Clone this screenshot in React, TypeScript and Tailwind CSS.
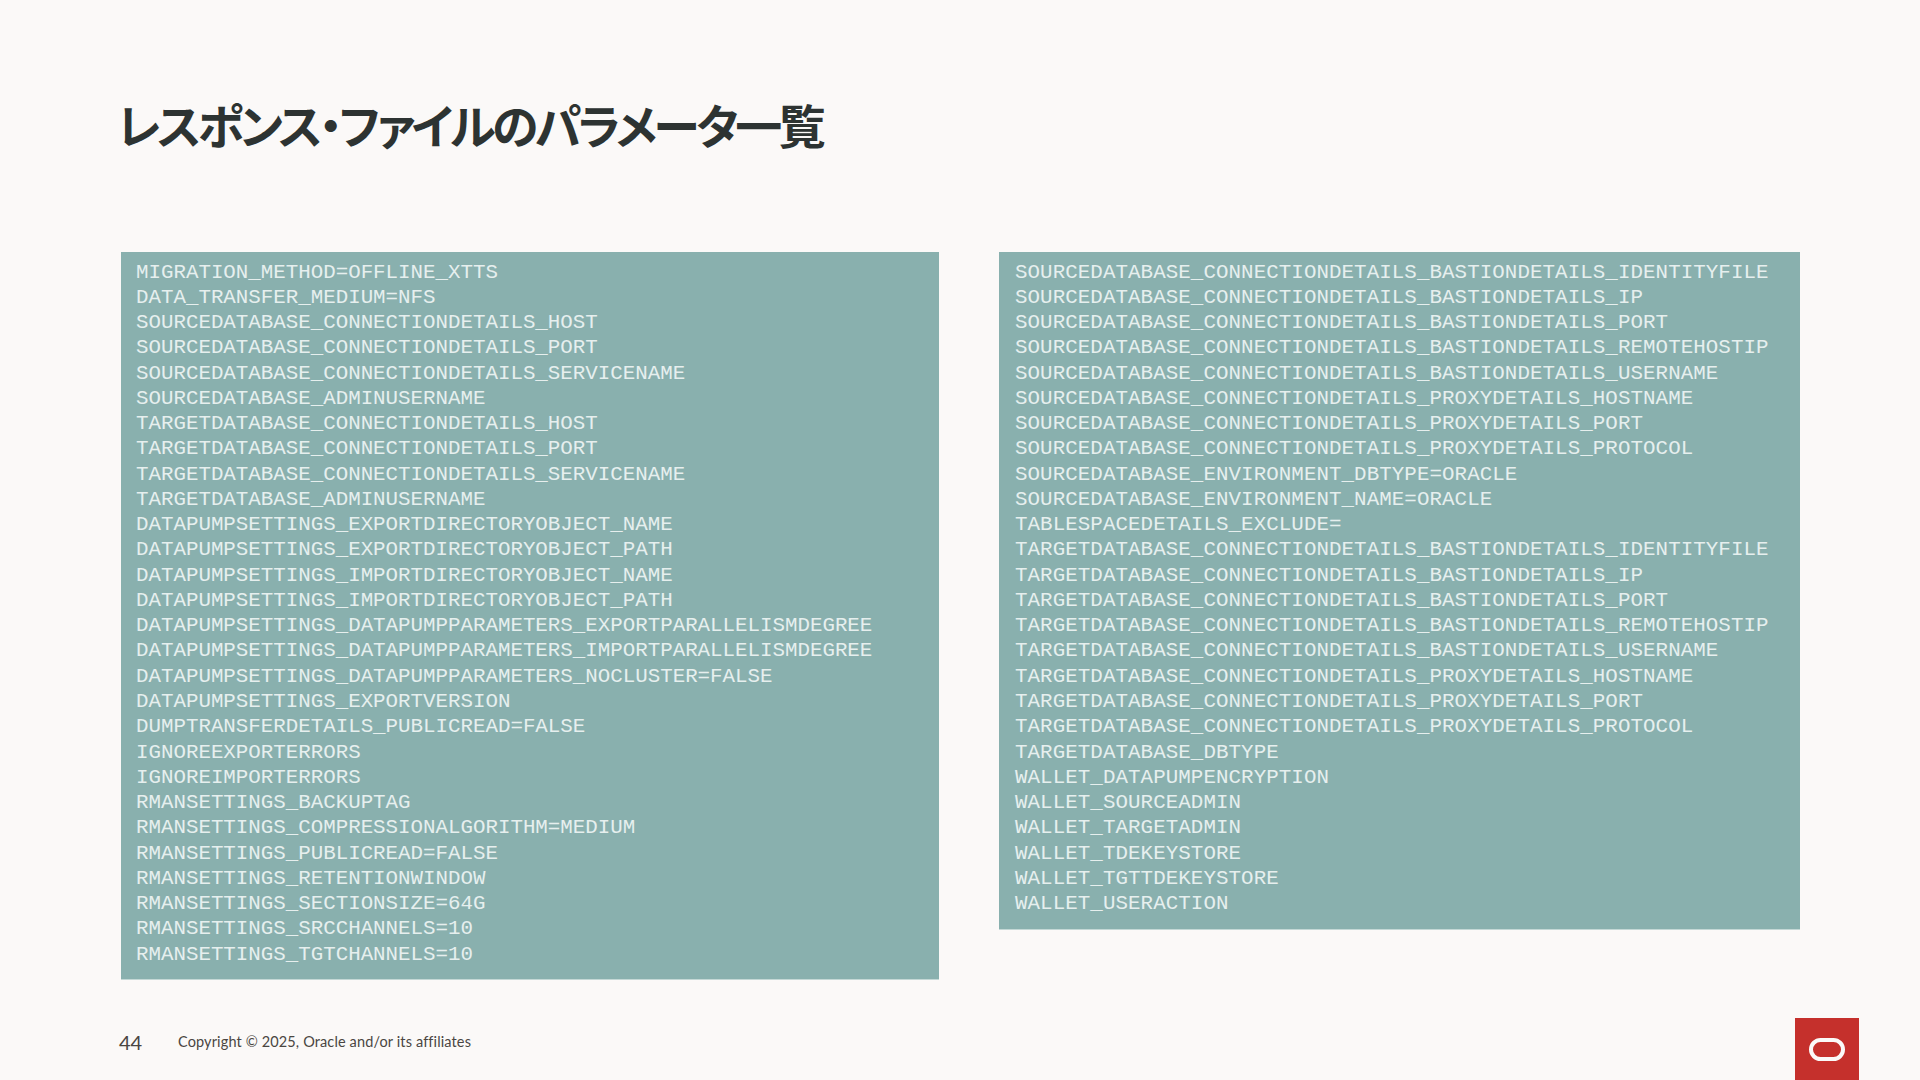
import React from 'react';

const leftLines = [
  'MIGRATION_METHOD=OFFLINE_XTTS',
  'DATA_TRANSFER_MEDIUM=NFS',
  'SOURCEDATABASE_CONNECTIONDETAILS_HOST',
  'SOURCEDATABASE_CONNECTIONDETAILS_PORT',
  'SOURCEDATABASE_CONNECTIONDETAILS_SERVICENAME',
  'SOURCEDATABASE_ADMINUSERNAME',
  'TARGETDATABASE_CONNECTIONDETAILS_HOST',
  'TARGETDATABASE_CONNECTIONDETAILS_PORT',
  'TARGETDATABASE_CONNECTIONDETAILS_SERVICENAME',
  'TARGETDATABASE_ADMINUSERNAME',
  'DATAPUMPSETTINGS_EXPORTDIRECTORYOBJECT_NAME',
  'DATAPUMPSETTINGS_EXPORTDIRECTORYOBJECT_PATH',
  'DATAPUMPSETTINGS_IMPORTDIRECTORYOBJECT_NAME',
  'DATAPUMPSETTINGS_IMPORTDIRECTORYOBJECT_PATH',
  'DATAPUMPSETTINGS_DATAPUMPPARAMETERS_EXPORTPARALLELISMDEGREE',
  'DATAPUMPSETTINGS_DATAPUMPPARAMETERS_IMPORTPARALLELISMDEGREE',
  'DATAPUMPSETTINGS_DATAPUMPPARAMETERS_NOCLUSTER=FALSE',
  'DATAPUMPSETTINGS_EXPORTVERSION',
  'DUMPTRANSFERDETAILS_PUBLICREAD=FALSE',
  'IGNOREEXPORTERRORS',
  'IGNOREIMPORTERRORS',
  'RMANSETTINGS_BACKUPTAG',
  'RMANSETTINGS_COMPRESSIONALGORITHM=MEDIUM',
  'RMANSETTINGS_PUBLICREAD=FALSE',
  'RMANSETTINGS_RETENTIONWINDOW',
  'RMANSETTINGS_SECTIONSIZE=64G',
  'RMANSETTINGS_SRCCHANNELS=10',
  'RMANSETTINGS_TGTCHANNELS=10',
];

const rightLines = [
  'SOURCEDATABASE_CONNECTIONDETAILS_BASTIONDETAILS_IDENTITYFILE',
  'SOURCEDATABASE_CONNECTIONDETAILS_BASTIONDETAILS_IP',
  'SOURCEDATABASE_CONNECTIONDETAILS_BASTIONDETAILS_PORT',
  'SOURCEDATABASE_CONNECTIONDETAILS_BASTIONDETAILS_REMOTEHOSTIP',
  'SOURCEDATABASE_CONNECTIONDETAILS_BASTIONDETAILS_USERNAME',
  'SOURCEDATABASE_CONNECTIONDETAILS_PROXYDETAILS_HOSTNAME',
  'SOURCEDATABASE_CONNECTIONDETAILS_PROXYDETAILS_PORT',
  'SOURCEDATABASE_CONNECTIONDETAILS_PROXYDETAILS_PROTOCOL',
  'SOURCEDATABASE_ENVIRONMENT_DBTYPE=ORACLE',
  'SOURCEDATABASE_ENVIRONMENT_NAME=ORACLE',
  'TABLESPACEDETAILS_EXCLUDE=',
  'TARGETDATABASE_CONNECTIONDETAILS_BASTIONDETAILS_IDENTITYFILE',
  'TARGETDATABASE_CONNECTIONDETAILS_BASTIONDETAILS_IP',
  'TARGETDATABASE_CONNECTIONDETAILS_BASTIONDETAILS_PORT',
  'TARGETDATABASE_CONNECTIONDETAILS_BASTIONDETAILS_REMOTEHOSTIP',
  'TARGETDATABASE_CONNECTIONDETAILS_BASTIONDETAILS_USERNAME',
  'TARGETDATABASE_CONNECTIONDETAILS_PROXYDETAILS_HOSTNAME',
  'TARGETDATABASE_CONNECTIONDETAILS_PROXYDETAILS_PORT',
  'TARGETDATABASE_CONNECTIONDETAILS_PROXYDETAILS_PROTOCOL',
  'TARGETDATABASE_DBTYPE',
  'WALLET_DATAPUMPENCRYPTION',
  'WALLET_SOURCEADMIN',
  'WALLET_TARGETADMIN',
  'WALLET_TDEKEYSTORE',
  'WALLET_TGTTDEKEYSTORE',
  'WALLET_USERACTION',
];

const ParamPanel: React.FC<{ lines: string[]; className: string }> = ({ lines, className }) => (
  <div className={`bg-[#89b0ae] border-b border-[#c4d8d6] pt-[7.5px] pb-[12.5px] font-['Liberation_Mono',monospace] text-[20.8px] leading-[25.26px] text-[#e6efee] whitespace-pre ${className}`}>
    {lines.map((line) => (
      <div key={line}>{line}</div>
    ))}
  </div>
);

export default function App() {
  return (
    <div className="w-[1920px] h-[1080px] bg-[#fbf9f8] flex flex-col overflow-hidden">
      <h1 className="pl-[117px] pt-[91px] h-[252px] font-['Noto_Sans_CJK_JP',sans-serif] font-bold text-[47px] leading-[66px] tracking-[-3.6px] [font-feature-settings:'palt'] text-[#2d3332]">
        レスポンス・ファイルのパラメータ一覧
      </h1>

      <div className="flex items-start gap-[60px] pl-[121px] h-[766px]">
        <ParamPanel lines={leftLines} className="w-[818px] pl-[15px]" />
        <ParamPanel lines={rightLines} className="w-[801px] pl-[16px] tracking-[0.08px]" />
      </div>

      <div className="flex items-start justify-between pl-[119px] pr-[61px] h-[62px]">
        <div className="flex items-center h-[48px] font-['Lato',sans-serif] text-[#4a4642]">
          <span className="w-[59px] text-[20px]">44</span>
          <span className="text-[14.5px] tracking-[0.13px]">Copyright © 2025, Oracle and/or its affiliates</span>
        </div>
        <div className="w-[64px] h-[62px] bg-[#c5302c] flex items-start justify-center pt-[20px]">
          <svg width="36" height="23" viewBox="0 0 36 23" fill="none">
            <rect x="2" y="2" width="32" height="19" rx="9.5" stroke="#fbf9f8" strokeWidth="4" />
          </svg>
        </div>
      </div>
    </div>
  );
}
